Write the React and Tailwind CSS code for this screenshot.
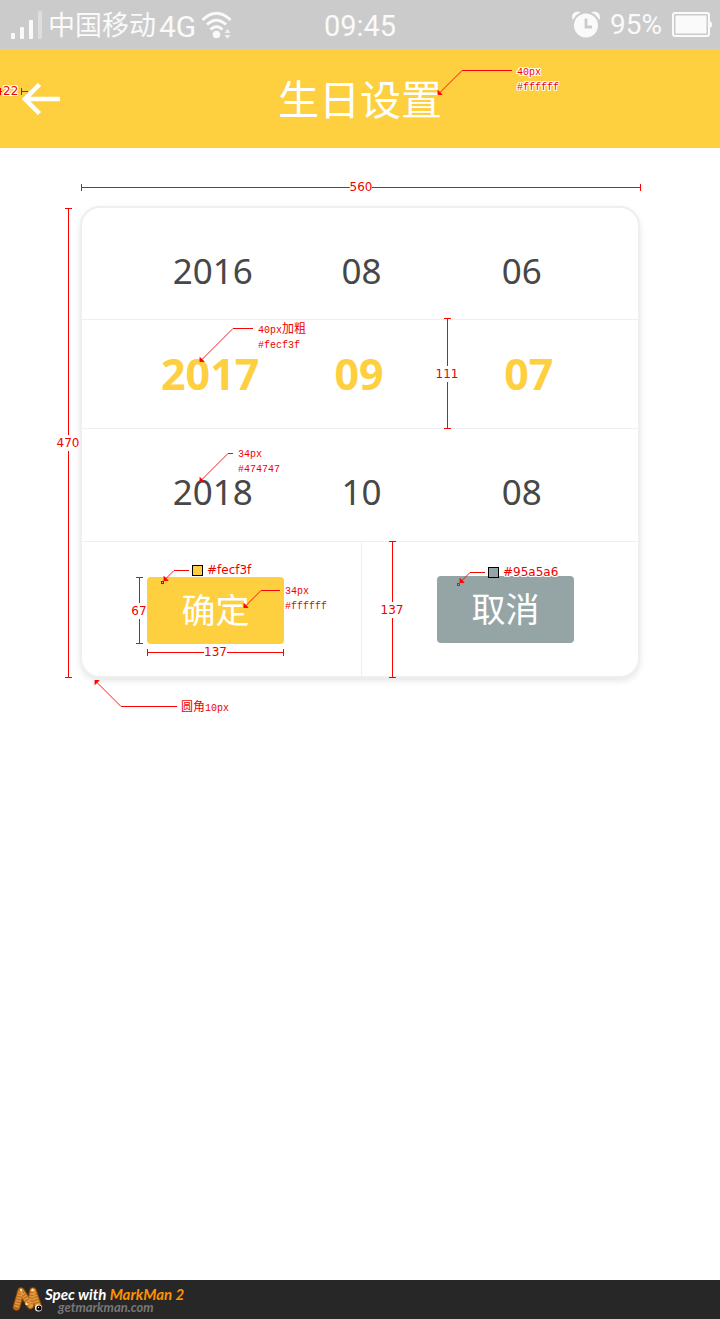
const SANS = 'font-["Noto_Sans","Noto_Sans_CJK_SC",sans-serif]';

const HALO =
  '[text-shadow:1px_0_white,-1px_0_white,0_1px_white,0_-1px_white,1px_1px_white,-1px_1px_white,1px_-1px_white,-1px_-1px_white]';

const ROWS = [
  { id: 'previous', cells: ['2016', '08', '06'] },
  { id: 'selected', cells: ['2017', '09', '07'] },
  { id: 'next', cells: ['2018', '10', '08'] },
];

function Measure({ children }) {
  return (
    <span className={`font-["DejaVu_Sans",sans-serif] text-xs leading-4 text-[#f00000] ${HALO}`}>
      {children}
    </span>
  );
}

function HorizontalRule({ className, value }) {
  return (
    <div className={`absolute flex items-center ${className}`}>
      <i className="h-[7px] w-px bg-[#ff0000]" />
      <i className="h-px flex-1 bg-[#ff0000]" />
      <Measure>{value}</Measure>
      <i className="h-px flex-1 bg-[#ff0000]" />
      <i className="h-[7px] w-px bg-[#ff0000]" />
    </div>
  );
}

function VerticalRule({ className, value }) {
  return (
    <div className={`absolute flex w-6 flex-col items-center ${className}`}>
      <i className="h-px w-[7px] bg-[#ff0000]" />
      <i className="w-px flex-1 bg-[#ff0000]" />
      <Measure>{value}</Measure>
      <i className="w-px flex-1 bg-[#ff0000]" />
      <i className="h-px w-[7px] bg-[#ff0000]" />
    </div>
  );
}

function Note({ className, children }) {
  return (
    <div
      className={`absolute whitespace-nowrap font-["Liberation_Mono","Noto_Sans_CJK_SC",monospace] text-[10px] leading-[15px] text-[#f00000] ${HALO} ${className}`}
    >
      {children}
    </div>
  );
}

/* Leader line: tip at bottom-left, bend at the top, then a flat run to the label. */
function Leader({ className, rise, run, flip = false }) {
  const top = flip ? rise + 0.5 : 0.5;
  const tip = flip ? 0.5 : rise + 0.5;
  const back = flip ? 4 : -4;
  return (
    <svg
      className={`absolute ${className}`}
      width={rise + run + 2}
      height={rise + 2}
      overflow="visible"
      aria-hidden="true"
    >
      <path d={`M0 ${tip}L${rise} ${top}`} stroke="#ff0000" strokeWidth="0.9" fill="none" />
      <path d={`M${rise} ${top}h${run}`} stroke="#ff0000" fill="none" />
      <path d={`M0 ${tip}v${back}l4 ${-back}z`} fill="#ff0000" stroke="#ff0000" strokeWidth="0.9" />
    </svg>
  );
}

function Swatch({ className, fill, children }) {
  return (
    <div className={`absolute flex items-center gap-1 ${className}`}>
      <i className={`size-[11px] border border-black ${fill}`} />
      <Measure>{children}</Measure>
    </div>
  );
}

function StatusBar() {
  return (
    <div className="grid h-[49px] grid-cols-3 items-center bg-[#cbcbcb] font-[Roboto,'Noto_Sans_CJK_SC',sans-serif] text-[#fafafa]">
      <div className="flex items-center gap-1 pl-[10px]">
        <svg className="shrink-0" width="34" height="30" viewBox="0 0 34 30" aria-hidden="true">
          <g fill="#fafafa">
            <rect x="1" y="23" width="4" height="6" rx="1" />
            <rect x="10" y="17" width="4" height="12" rx="1" />
            <rect x="19" y="10" width="4" height="19" rx="1" />
            <rect x="28" y="1" width="4" height="28" rx="1" opacity="0.4" />
          </g>
        </svg>
        <span className="flex items-center gap-[3px] pt-1 whitespace-nowrap text-[27px] leading-[45px]">
          中国移动<span className="text-[30px]">4G</span>
        </span>
        <svg className="shrink-0" width="32" height="30" viewBox="0 0 32 30" aria-hidden="true">
          <g fill="none" stroke="#fafafa" strokeWidth="3">
            <path d="M2.500 10Q16.500 -3.500 30.500 10" />
            <path d="M7 14.500Q16.500 6 26 14.500" />
            <path d="M10.500 19.500Q16.500 13.500 22.500 19.500" />
          </g>
          <circle cx="16.500" cy="24.500" r="3.800" fill="#fafafa" />
          <path d="M27.500 19l3 4h-6zM27.500 29l3-4h-6z" fill="#f0f0f0" />
        </svg>
      </div>
      <time className="pt-1 text-center text-[29px] leading-[45px]">09:45</time>
      <div className="flex items-center justify-end gap-[9px] pr-2">
        <svg width="30" height="30" viewBox="0 0 30 30" aria-hidden="true">
          <circle cx="6.500" cy="7" r="5.500" fill="#fafafa" />
          <circle cx="23.500" cy="7" r="5.500" fill="#fafafa" />
          <circle cx="15" cy="15.500" r="13" fill="#fafafa" stroke="#cbcbcb" strokeWidth="2" />
          <path d="M15 8.500v8.500h6" stroke="#cbcbcb" strokeWidth="2.800" fill="none" />
        </svg>
        <span className="text-[28px] leading-[49px]">95%</span>
        <svg width="41" height="26" viewBox="0 0 41 26" aria-hidden="true">
          <rect x="2" y="1" width="36" height="23" rx="2" fill="none" stroke="#fafafa" strokeWidth="2" />
          <rect x="4.500" y="3.500" width="31" height="18" fill="#fafafa" />
          <path d="M38 9q3 0 3 3.500t-3 3.500z" fill="#fafafa" />
        </svg>
      </div>
    </div>
  );
}

function Header() {
  return (
    <header className="relative grid h-[99px] grid-cols-[1fr_auto_1fr] items-center bg-[#fecf3f]">
      <button type="button" aria-label="返回" className="ml-[22px] w-fit">
        <svg width="38" height="32" viewBox="0 0 38 32" aria-hidden="true">
          <path d="M17.500 1.500L3 16L17.500 30.500M2.500 16H38" stroke="white" strokeWidth="4.500" fill="none" />
        </svg>
      </button>
      <h1 className={`${SANS} text-[41px] leading-[60px] text-white`}>生日设置</h1>
      <div className="absolute top-[34px] left-0 flex items-center">
        <i className="h-[7px] w-px bg-[#ff0000]" />
        <i className="mr-px h-px w-px bg-[#ff0000]" />
        <Measure>22</Measure>
        <i className="ml-[3px] h-[7px] w-px bg-[#ff0000]" />
        <i className="h-px w-[6px] bg-[#ff0000]" />
      </div>
      <Leader className="top-[21px] left-1/2 ml-[78px]" rise={24} run={50} />
      <Note className="top-4 left-1/2 ml-[157px]">
        40px
        <br />
        #ffffff
      </Note>
    </header>
  );
}

const ROW_STYLES = {
  previous: 'h-28 pt-[14px] text-[35px] text-[#474747] grid-cols-[261fr_37fr_258fr]',
  selected: 'h-[109px] text-[43px] font-bold text-[#fecf3f] grid-cols-[261fr_32fr_263fr]',
  next: 'h-[113px] pt-[14px] text-[35px] text-[#474747] grid-cols-[261fr_37fr_258fr]',
};

function DateRow({ row }) {
  const selected = row.id === 'selected';
  return (
    <div
      className={`grid items-center border-b border-[#efefef] text-center leading-10 ${ROW_STYLES[row.id]}`}
    >
      <span className={selected ? 'pl-1' : 'pl-[2px]'}>{row.cells[0]}</span>
      <span className="flex justify-center">{row.cells[1]}</span>
      <span className={selected ? 'pl-9' : 'pl-6'}>{row.cells[2]}</span>
    </div>
  );
}

function DateCard() {
  return (
    <div className="relative">
      <section
        className={`${SANS} rounded-[20px] border-2 border-[#efefef] bg-white shadow-[0_3px_6px_rgba(0,0,0,0.1)]`}
      >
        {ROWS.map((row) => (
          <DateRow key={row.id} row={row} />
        ))}
        <div className="grid h-[134px] grid-cols-[280fr_276fr] text-[34px] leading-[67px] text-white">
          <div className="border-r border-[#efefef] pt-[35px] pl-[65px]">
            <button type="button" className="h-[67px] w-[137px] rounded bg-[#fecf3f]">
              确定
            </button>
          </div>
          <div className="pt-[34px] pl-[75px]">
            <button type="button" className="h-[67px] w-[137px] rounded bg-[#95a5a6]">
              取消
            </button>
          </div>
        </div>
      </section>

      <HorizontalRule className="-top-[27px] left-px w-full" value="560" />
      <VerticalRule className="top-[2px] bottom-0 -left-6" value="470" />
      <VerticalRule className="top-[112px] left-[355px] h-[111px]" value="111" />
      <VerticalRule className="top-[335px] bottom-0 left-[300px]" value="137" />
      <VerticalRule className="top-[371px] left-[47px] h-[67px]" value="67" />
      <HorizontalRule className="top-[438px] left-[67px] w-[137px]" value="137" />

      <Leader className="top-[122px] left-[120px]" rise={33} run={20} />
      <Note className="top-[117px] left-[178px]">
        40px<span className="text-xs leading-[15px]">加粗</span>
        <br />
        #fecf3f
      </Note>
      <Leader className="top-[247px] left-[120px]" rise={28} run={5} />
      <Note className="top-[241px] left-[158px]">
        34px
        <br />
        #474747
      </Note>
      <Leader className="top-[364px] left-[84px]" rise={10} run={15} />
      <i className="absolute top-[375px] left-[81px] size-[3px] border border-[#2c3e70]" />
      <Swatch className="top-[356px] left-28" fill="bg-[#fecf3f]">#fecf3f</Swatch>
      <Leader className="top-[384px] left-[164px]" rise={17} run={19} />
      <Note className="top-[378px] left-[205px]">
        34px
        <br />
        #ffffff
      </Note>
      <Leader className="top-[366px] left-[380px]" rise={10} run={15} />
      <i className="absolute top-[377px] left-[377px] size-[3px] border border-[#555555]" />
      <Swatch className="top-[358px] left-[408px]" fill="bg-[#95a5a6]">#95a5a6</Swatch>
      <Leader className="top-[474px] left-[15px]" rise={26} run={56} flip />
      <Note className="top-[495px] left-[101px]">
        <span className="text-xs leading-[15px]">圆角</span>10px
      </Note>
    </div>
  );
}

const BODY = 'M4.500 22L9 6L18.500 20.500L21 6L26.500 22';

function Footer() {
  return (
    <footer className="flex h-[39px] items-center gap-px bg-[#272727] pl-3 font-[Lato,sans-serif] font-bold italic">
      <svg width="32" height="30" viewBox="0 0 32 30" aria-hidden="true">
        <g fill="none" strokeLinecap="round" strokeLinejoin="round">
          <path d={BODY} stroke="#6b3608" strokeWidth="8" />
          <path d={BODY} stroke="#b9691a" strokeWidth="6.500" />
          <path d={BODY} stroke="#e09a40" strokeWidth="5" strokeDasharray="1.6 1.2" strokeLinecap="butt" />
        </g>
        <g fill="#ffe9a8">
          <circle cx="9" cy="5" r="1.200" />
          <circle cx="20.500" cy="5" r="1.200" />
          <circle cx="14.500" cy="19" r="1.200" />
        </g>
        <circle cx="26.500" cy="23" r="3.500" fill="white" />
        <circle cx="27" cy="23" r="2.600" fill="black" />
        <circle cx="26.500" cy="22.500" r="0.700" fill="white" />
      </svg>
      <div>
        <p className="text-[15px] leading-[14px] text-white">
          Spec with <span className="text-[#ff9000]">MarkMan 2</span>
        </p>
        <a href="#getmarkman" className="block pl-[13px] text-[13px] leading-3 text-[#777777]">
          getmarkman.com
        </a>
      </div>
    </footer>
  );
}

export default function App() {
  return (
    <div className="flex min-h-screen flex-col bg-white">
      <StatusBar />
      <Header />
      <main className="flex-1 px-20 pt-[58px]">
        <div className="mx-auto max-w-[560px]">
          <DateCard />
        </div>
      </main>
      <Footer />
    </div>
  );
}
